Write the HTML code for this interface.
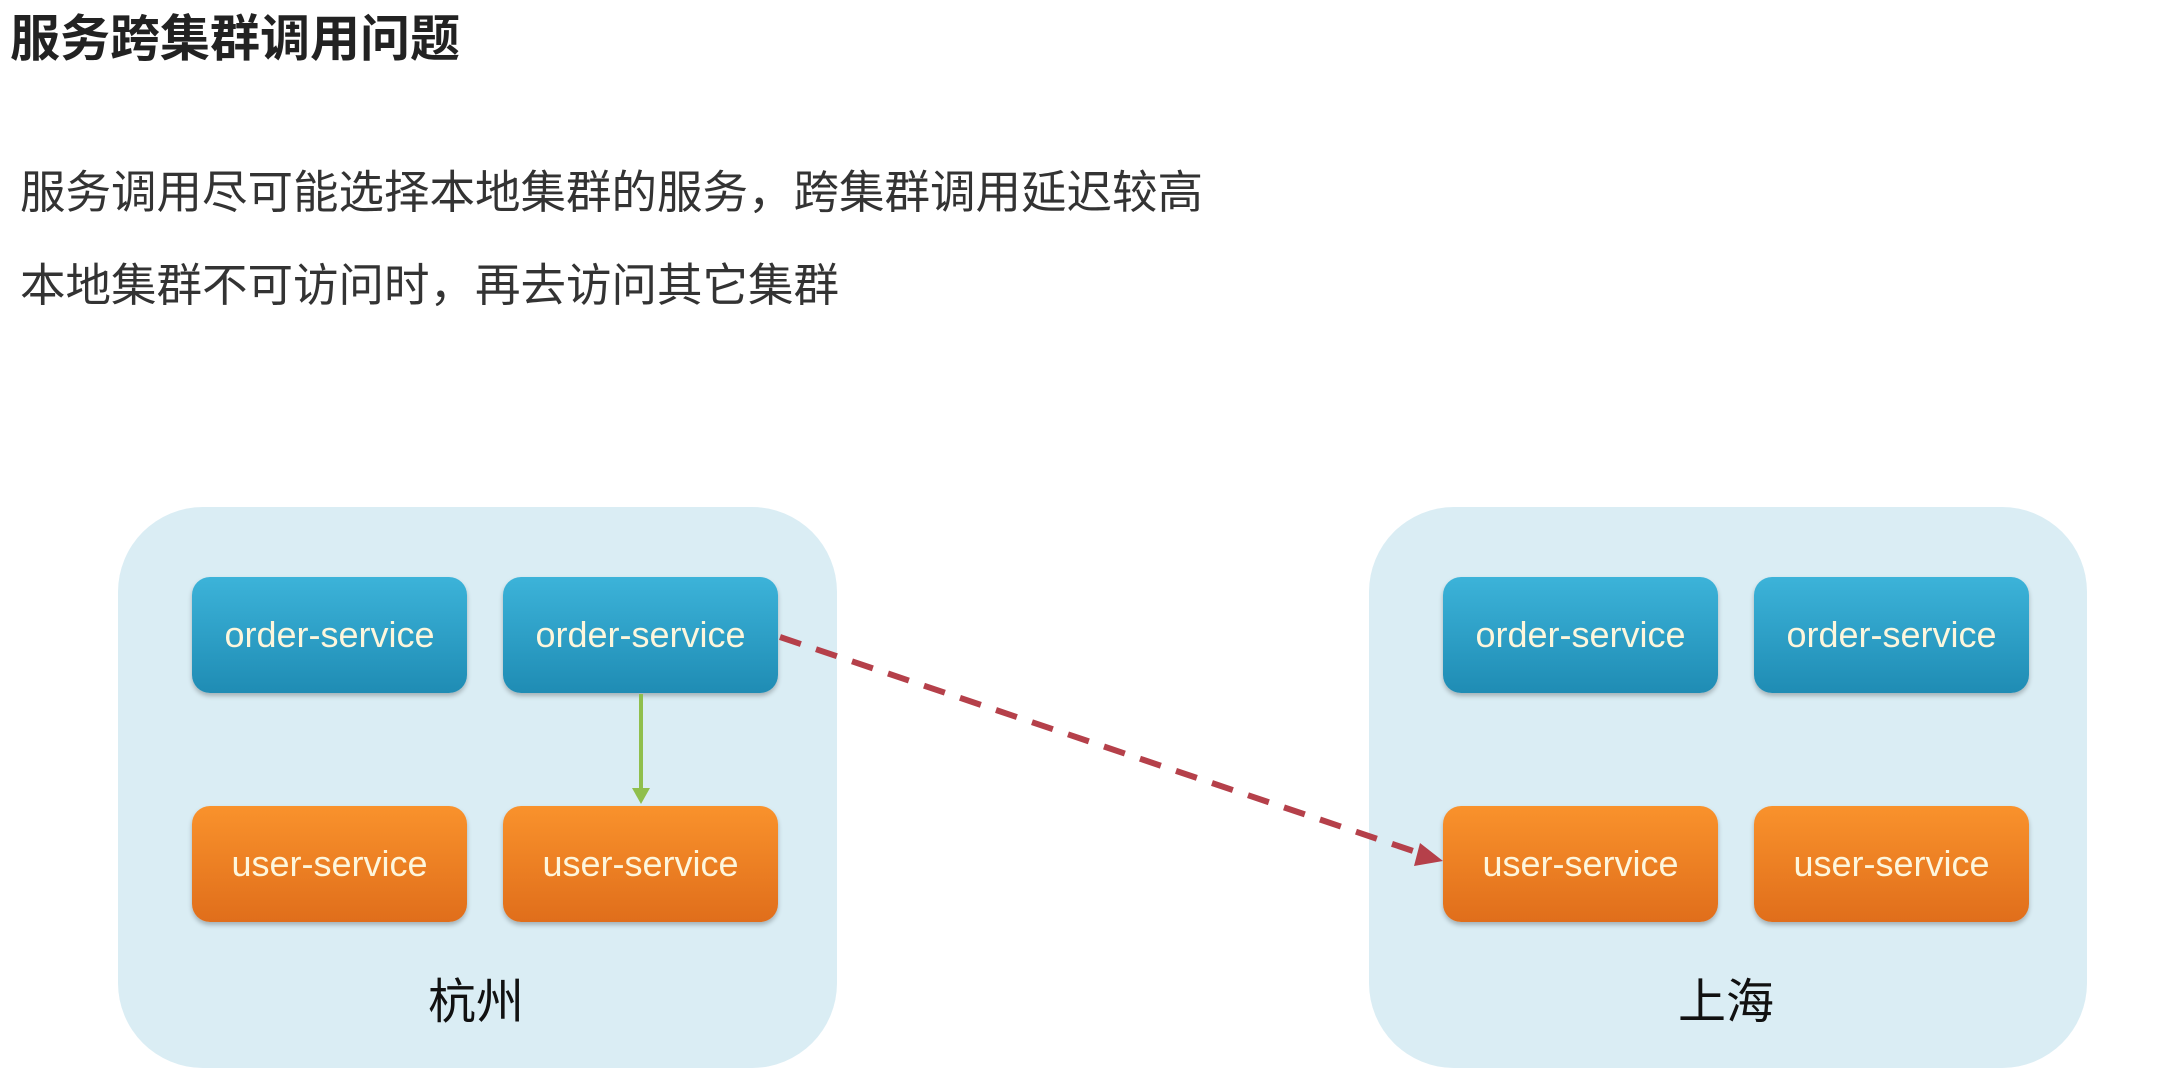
<!DOCTYPE html>
<html><head><meta charset="utf-8"><style>
body{margin:0;width:2179px;height:1083px;background:#fff;position:relative;overflow:hidden;font-family:"Liberation Sans","Noto Sans CJK SC",sans-serif;}
.t{position:absolute;white-space:nowrap;color:#222;}
.panel{position:absolute;background:#daedf4;border-radius:85px;}
.box{position:absolute;width:275px;height:116px;border-radius:18px;color:#fdf6dc;font-size:36px;display:flex;align-items:center;justify-content:center;box-shadow:0 3px 5px rgba(0,0,0,.25);}
.b{background:linear-gradient(#3cb3d9,#1f8cb4);}
.o{background:linear-gradient(#f9922c,#e06e1b);}
</style></head><body>
<div class="t" style="left:10px;top:9px;font-size:50px;font-weight:bold;line-height:60px;">服务跨集群调用问题</div>
<div class="t" style="left:20px;top:165px;font-size:45.5px;line-height:56px;color:#333;">服务调用尽可能选择本地集群的服务，跨集群调用延迟较高</div>
<div class="t" style="left:20px;top:258px;font-size:45.5px;line-height:56px;color:#333;">本地集群不可访问时，再去访问其它集群</div>
<div class="panel" style="left:118px;top:507px;width:719px;height:561px;"></div>
<div class="panel" style="left:1369px;top:507px;width:718px;height:561px;"></div>
<div class="box b" style="left:192px;top:577px;">order-service</div>
<div class="box b" style="left:503px;top:577px;">order-service</div>
<div class="box o" style="left:192px;top:806px;">user-service</div>
<div class="box o" style="left:503px;top:806px;">user-service</div>
<div class="box b" style="left:1443px;top:577px;">order-service</div>
<div class="box b" style="left:1754px;top:577px;">order-service</div>
<div class="box o" style="left:1443px;top:806px;">user-service</div>
<div class="box o" style="left:1754px;top:806px;">user-service</div>
<div class="t" style="left:428px;top:975px;font-size:48px;line-height:56px;color:#111;">杭州</div>
<div class="t" style="left:1678px;top:975px;font-size:48px;line-height:56px;color:#111;">上海</div>
<svg style="position:absolute;left:0;top:0" width="2179" height="1083">
<line x1="641" y1="694" x2="641" y2="790" stroke="#8fbf4c" stroke-width="4"/>
<polygon points="632,788 650,788 641,804" fill="#8fbf4c"/>
<line x1="780" y1="637" x2="1422" y2="854" stroke="#b5404a" stroke-width="6" stroke-dasharray="22,16"/>
<polygon points="1443,861 1420,843 1414,866" fill="#b5404a"/>
</svg>
</body></html>
